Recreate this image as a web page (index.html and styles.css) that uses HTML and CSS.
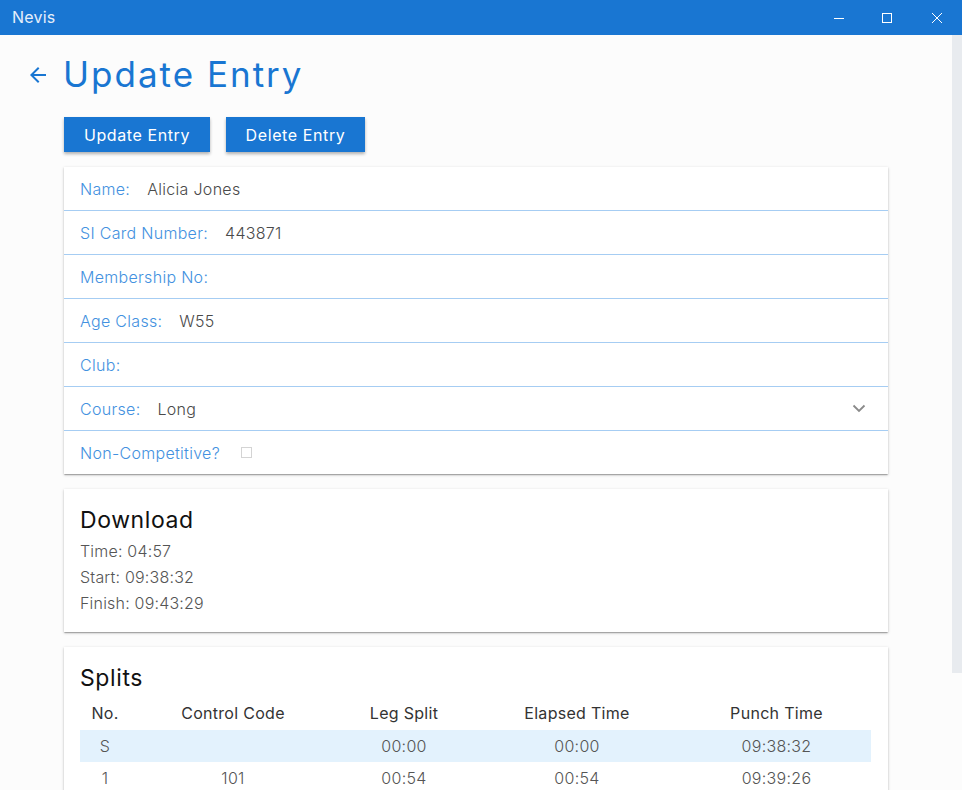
FILE: index.html
```html
<!DOCTYPE html>
<html>
<head>
<meta charset="utf-8">
<link rel="stylesheet" href="styles.css">
</head>
<body>
<div class="titlebar">
  <div class="app-name">Nevis</div>
  <div class="win-controls">
    <span class="wc"><svg width="12" height="12" viewBox="0 0 12 12"><path d="M1 6.5h10" stroke="#fff" stroke-width="1"/></svg></span>
    <span class="wc"><svg width="12" height="12" viewBox="0 0 12 12"><rect x="1.5" y="1.5" width="9" height="9" fill="none" stroke="#fff" stroke-width="1"/></svg></span>
    <span class="wc"><svg width="12" height="12" viewBox="0 0 12 12"><path d="M1 1l10 10M11 1L1 11" stroke="#fff" stroke-width="1"/></svg></span>
  </div>
</div>
<div class="window">
  <div class="content">
    <div class="page-header">
      <svg class="back" width="24" height="24" viewBox="0 0 24 24"><path d="M20 11H7.83l5.59-5.59L12 4l-8 8 8 8 1.41-1.41L7.83 13H20v-2z" fill="#1976d2"/></svg>
      <h1 class="page-title">Update Entry</h1>
    </div>
    <div class="actions">
      <button class="btn btn-update">Update Entry</button>
      <button class="btn btn-delete">Delete Entry</button>
    </div>
    <div class="card form-card">
      <div class="row"><span class="label">Name:</span><span class="value">Alicia Jones</span></div>
      <div class="row"><span class="label">SI Card Number:</span><span class="value">443871</span></div>
      <div class="row"><span class="label">Membership No:</span><span class="value"></span></div>
      <div class="row"><span class="label">Age Class:</span><span class="value">W55</span></div>
      <div class="row"><span class="label">Club:</span><span class="value"></span></div>
      <div class="row"><span class="label">Course:</span><span class="value">Long</span><svg class="chev" width="14" height="9" viewBox="0 0 14 9"><path d="M1.5 1.5l5.5 5.5 5.5-5.5" fill="none" stroke="#8a8a8a" stroke-width="1.8"/></svg></div>
      <div class="row"><span class="label">Non-Competitive?</span><span class="checkbox"></span></div>
    </div>
    <div class="card info-card">
      <h2 class="card-title">Download</h2>
      <div class="info-line">Time: 04:57</div>
      <div class="info-line">Start: 09:38:32</div>
      <div class="info-line">Finish: 09:43:29</div>
    </div>
    <div class="card splits-card">
      <h2 class="card-title">Splits</h2>
      <table class="splits">
        <thead>
          <tr><th class="c1">No.</th><th class="c2">Control Code</th><th class="c3">Leg Split</th><th class="c4">Elapsed Time</th><th class="c5">Punch Time</th></tr>
        </thead>
        <tbody>
          <tr class="sel"><td>S</td><td></td><td>00:00</td><td>00:00</td><td>09:38:32</td></tr>
          <tr><td>1</td><td>101</td><td>00:54</td><td>00:54</td><td>09:39:26</td></tr>
          <tr><td>2</td><td>102</td><td>00:41</td><td>01:35</td><td>09:40:07</td></tr>
        </tbody>
      </table>
    </div>
  </div>
  <div class="scrollbar"><div class="thumb"></div></div>
</div>
</body>
</html>
```
FILE: styles.css
```css
* { box-sizing: border-box; }
html, body {
  margin: 0;
  padding: 0;
  height: 100%;
  overflow: hidden;
}
body {
  font-family: "Inter", "Liberation Sans", sans-serif;
  background: #fcfcfc;
  color: #333;
  display: flex;
  flex-direction: column;
}
.titlebar {
  height: 35px;
  flex: 0 0 35px;
  background: #1976d2;
  display: flex;
  align-items: center;
  justify-content: space-between;
}
.app-name {
  color: #e6effa;
  font-size: 16px;
  padding-left: 12px;
  padding-bottom: 2px;
  letter-spacing: 0.2px;
}
.win-controls {
  display: flex;
  height: 100%;
}
.wc {
  width: 50px;
  display: flex;
  align-items: center;
  justify-content: center;
}
.win-controls .wc:first-child { width: 46px; }
.window {
  flex: 1;
  display: flex;
  min-height: 0;
}
.content {
  flex: 1;
  overflow: hidden;
  padding-left: 64px;
}
.scrollbar {
  width: 10px;
  flex: 0 0 10px;
  background: #fcfcfc;
}
.thumb {
  height: 638px;
  background: #e8ebef;
}
.page-header {
  display: flex;
  align-items: center;
  margin-left: -38px;
  margin-top: 17px;
  height: 44px;
}
.back {
  margin-right: 13px;
  margin-top: 1px;
}
.page-title {
  margin: 0;
  font-size: 35px;
  font-weight: 400;
  color: #1976d2;
  line-height: 44px;
  letter-spacing: 2px;
}
.actions {
  display: flex;
  gap: 16px;
  margin-top: 21px;
}
.btn {
  height: 35px;
  border: none;
  background: #1976d2;
  color: #fff;
  font-family: inherit;
  font-size: 16px;
  padding: 0;
  letter-spacing: 0.6px;
  box-shadow: 0 2px 3px rgba(0,0,0,0.3);
  border-radius: 0;
}
.btn-update { width: 146px; }
.btn-delete { width: 139px; }
.card {
  background: #fff;
  box-shadow: 0 1px 3px rgba(0,0,0,0.2), 0 1px 1px rgba(0,0,0,0.14), 0 2px 1px -1px rgba(0,0,0,0.12);
  width: 824px;
}
.form-card {
  margin-top: 15px;
}
.row {
  height: 44px;
  display: flex;
  align-items: center;
  padding: 0 20px 0 16px;
  border-bottom: 1px solid #a6cdf3;
  font-size: 16px;
  letter-spacing: 0.3px;
}
.row:last-child { border-bottom: none; height: 43px; }
.label {
  color: #4391e0;
  font-weight: 300;
  margin-right: 17px;
}
.value {
  color: #4a4a4a;
  font-weight: 300;
  flex: 1;
}
.chev {
  margin-right: 2px;
}
.checkbox {
  width: 11px;
  height: 11px;
  border: 1px solid #d4d4d4;
  margin-left: 4px;
}
.info-card {
  margin-top: 15px;
  padding: 16px 16px 20px;
  height: 143px;
}
.card-title {
  margin: 0;
  font-size: 23px;
  font-weight: 400;
  color: #111;
  line-height: 30px;
  letter-spacing: 0.6px;
}
.info-line {
  font-size: 16px;
  font-weight: 300;
  color: #555;
  line-height: 26px;
  letter-spacing: 0.2px;
}
.info-line:first-of-type { margin-top: 3px; }
.splits-card {
  margin-top: 15px;
  padding: 16px 16px 20px;
}
.splits {
  width: 791px;
  border-collapse: collapse;
  margin-top: 3px;
}
.splits th {
  font-weight: 400;
  font-size: 16px;
  color: #333;
  height: 34px;
  text-align: center;
  padding: 0;
  letter-spacing: 0.3px;
}
.splits td {
  font-weight: 300;
  font-size: 16px;
  color: #555;
  height: 32px;
  text-align: center;
  padding: 0;
  letter-spacing: 0.3px;
}
.c1 { width: 50px; }
.c2 { width: 206px; }
.c3 { width: 136px; }
.c4 { width: 210px; }
.c5 { width: 189px; }
.splits tr.sel td { background: #e3f2fd; }
```
